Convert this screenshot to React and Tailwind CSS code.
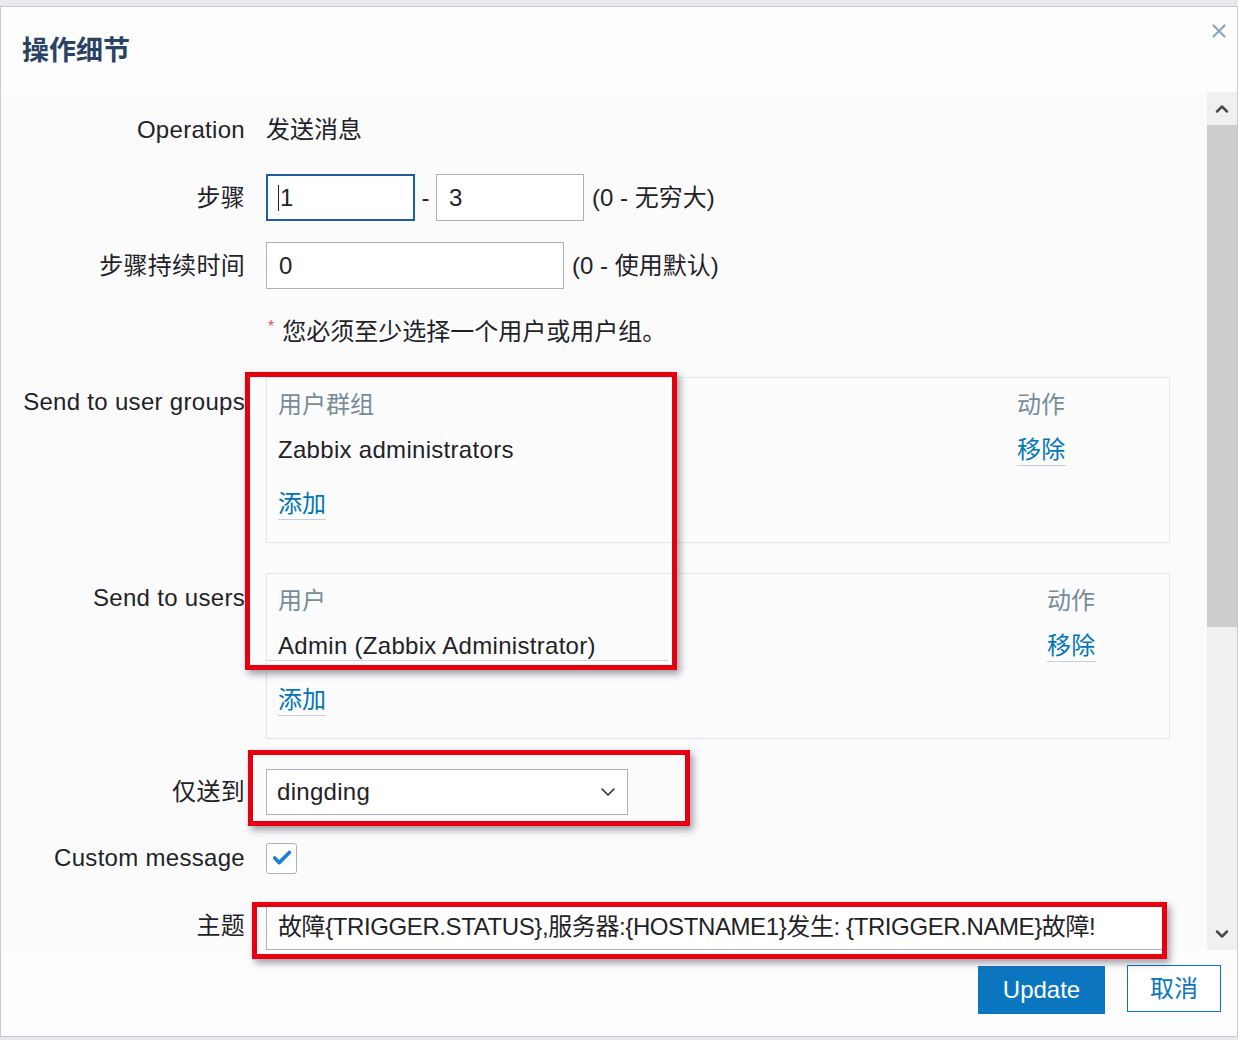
import { ChevronDown, ChevronUp, Check, X } from "lucide-react"

const font = { fontFamily: '"Liberation Sans", "Noto Sans CJK SC", sans-serif' }

function Row({ label, className = "", top = "items-center", labelClass = "", children }) {
  return (
    <div className={`flex ${top} ${className}`}>
      <div className={`w-[244px] shrink-0 text-right text-[24px] text-[#1f2327] tracking-[0.3px] whitespace-nowrap ${labelClass}`}>
        {label}
      </div>
      <div className="ml-[21px] flex items-center flex-1 min-w-0">{children}</div>
    </div>
  )
}

function Link({ children }) {
  return (
    <span className="inline-block text-[24px] leading-[30px] text-[#0275b8] border-b border-[#c4d0da]">
      {children}
    </span>
  )
}

function ListBox({ head, item, nameWidth }) {
  return (
    <div className="w-[904px] h-[166px] border border-[#e3e6e9] bg-[#fcfcfd] pt-[5px]">
      <div className="flex h-[44px] items-center text-[24px] text-[#768d99]">
        <div className="pl-[11px]" style={{ width: nameWidth }}>{head}</div>
        <div>动作</div>
      </div>
      <div className="flex h-[47px] items-center text-[24px] text-[#1f2327] tracking-[0.3px]">
        <div className="pl-[11px]" style={{ width: nameWidth }}>{item}</div>
        <Link>移除</Link>
      </div>
      <div className="flex h-[62px] items-center pl-[11px]">
        <Link>添加</Link>
      </div>
    </div>
  )
}

const frame = "absolute border-[5px] border-[#e6000f] shadow-[3px_4px_7px_rgba(40,40,60,0.45)] pointer-events-none"

export default function App() {
  return (
    <div className="h-[1040px] bg-[#e7e9ec] pt-[6px] overflow-hidden" style={font}>
      <div className="relative h-[1031px] border border-[#c6cbd1] bg-[#fdfdfd] flex flex-col">
        {/* Header */}
        <div className="h-[85px] shrink-0 pl-[21px] pt-[26px]">
          <h1 className="text-[27px] leading-[36px] font-bold text-[#2a4263]">操作细节</h1>
        </div>
        <button className="absolute top-[13px] right-[7px] text-[#8fa6bf]">
          <X size={22} strokeWidth={2.5} />
        </button>

        {/* Body */}
        <div className="h-[858px] shrink-0 flex overflow-hidden">
          <div className="relative flex-1 flex flex-col pt-[15px] bg-[#fbfbfc]">
            <Row label="Operation" className="h-[47px]">
              <span className="text-[24px] text-[#1f2327]">发送消息</span>
            </Row>

            <Row label="步骤" className="h-[47px] mt-[22px]">
              <div className="w-[149px] h-[47px] border-2 border-[#1f5d9c] bg-white flex items-center pl-[10px] text-[24px] text-[#1f2327]">
                <span className="w-px h-[26px] bg-[#1f2327] mr-px" />1
              </div>
              <span className="w-[21px] text-center text-[24px] text-[#1f2327]">-</span>
              <div className="w-[148px] h-[47px] border border-[#a9b1b9] bg-white flex items-center pl-[12px] text-[24px] text-[#1f2327]">
                3
              </div>
              <span className="ml-[8px] text-[24px] text-[#1f2327]">(0 - 无穷大)</span>
            </Row>

            <Row label="步骤持续时间" className="h-[47px] mt-[21px]">
              <div className="w-[298px] h-[47px] border border-[#a9b1b9] bg-white flex items-center pl-[12px] text-[24px] text-[#1f2327]">
                0
              </div>
              <span className="ml-[8px] text-[24px] text-[#1f2327]">(0 - 使用默认)</span>
            </Row>

            <Row label="" className="h-[47px] mt-[20px]">
              <span className="ml-[2px] mr-[8px] -mt-[10px] text-[16px] text-[#e45959]">*</span>
              <span className="text-[24px] text-[#1f2327]">您必须至少选择一个用户或用户组。</span>
            </Row>

            <Row label="Send to user groups" top="items-start" labelClass="pt-[7px]" className="mt-[22px]">
              <ListBox head="用户群组" item="Zabbix administrators" nameWidth="750px" />
            </Row>

            <Row label="Send to users" top="items-start" labelClass="pt-[7px]" className="mt-[30px]">
              <ListBox head="用户" item="Admin (Zabbix Administrator)" nameWidth="780px" />
            </Row>

            <Row label="仅送到" className="h-[46px] mt-[30px]">
              <div className="w-[362px] h-[46px] border border-[#a9b1b9] bg-white flex items-center justify-between pl-[10px] pr-[7px] text-[24px] text-[#1f2327] tracking-[0.3px]">
                dingding
                <ChevronDown size={24} strokeWidth={1.6} className="text-[#2b2f33]" />
              </div>
            </Row>

            <Row label="Custom message" className="h-[47px] mt-[21px]">
              <div className="w-[31px] h-[31px] border border-[#a9b1b9] rounded-[3px] bg-white flex items-center justify-center">
                <Check size={22} strokeWidth={4} className="text-[#1e7fd8]" />
              </div>
            </Row>

            <Row label="主题" className="h-[48px] mt-[21px]">
              <div className="w-[898px] h-[48px] border border-[#a9b1b9] bg-white flex items-center pl-[11px] pt-[3px] text-[24px] text-[#1f2327] tracking-[-0.4px] whitespace-nowrap">
                故障{"{TRIGGER.STATUS}"},服务器:{"{HOSTNAME1}"}发生: {"{TRIGGER.NAME}"}故障!
              </div>
            </Row>

            {/* annotation frames */}
            <div className={`${frame} left-[244px] top-[280px] w-[432px] h-[298px]`}>
              <div className="absolute left-[16px] right-[4px] bottom-[3px] h-[2px] bg-[#fbfbfc] border-t border-[#d3d7dc]" />
            </div>
            <div className={`${frame} left-[247px] top-[658px] w-[442px] h-[76px]`} />
          </div>

          {/* Scrollbar */}
          <div className="w-[30px] shrink-0 flex flex-col bg-[#f0f0f0]">
            <div className="h-[33px] flex items-center justify-center text-[#4a4a4a]">
              <ChevronUp size={20} strokeWidth={3} />
            </div>
            <div className="h-[502px] bg-[#cdcdcd]" />
            <div className="flex-1" />
            <div className="h-[32px] flex items-center justify-center text-[#4a4a4a]">
              <ChevronDown size={20} strokeWidth={3} />
            </div>
          </div>
        </div>

        {/* frame over the subject field, it runs past the scroll area */}
        <div className={`${frame} left-[251px] top-[895px] w-[915px] h-[57px]`} />

        {/* Footer */}
        <div className="flex-1 flex justify-end items-start gap-[22px] pt-[16px] pr-[16px]">
          <button className="w-[127px] h-[48px] bg-[#0b76c0] text-white text-[24px]">Update</button>
          <button className="w-[94px] h-[47px] border border-[#0b76c0] bg-white text-[#0b76c0] text-[24px] -mt-px">
            取消
          </button>
        </div>
      </div>
    </div>
  )
}
